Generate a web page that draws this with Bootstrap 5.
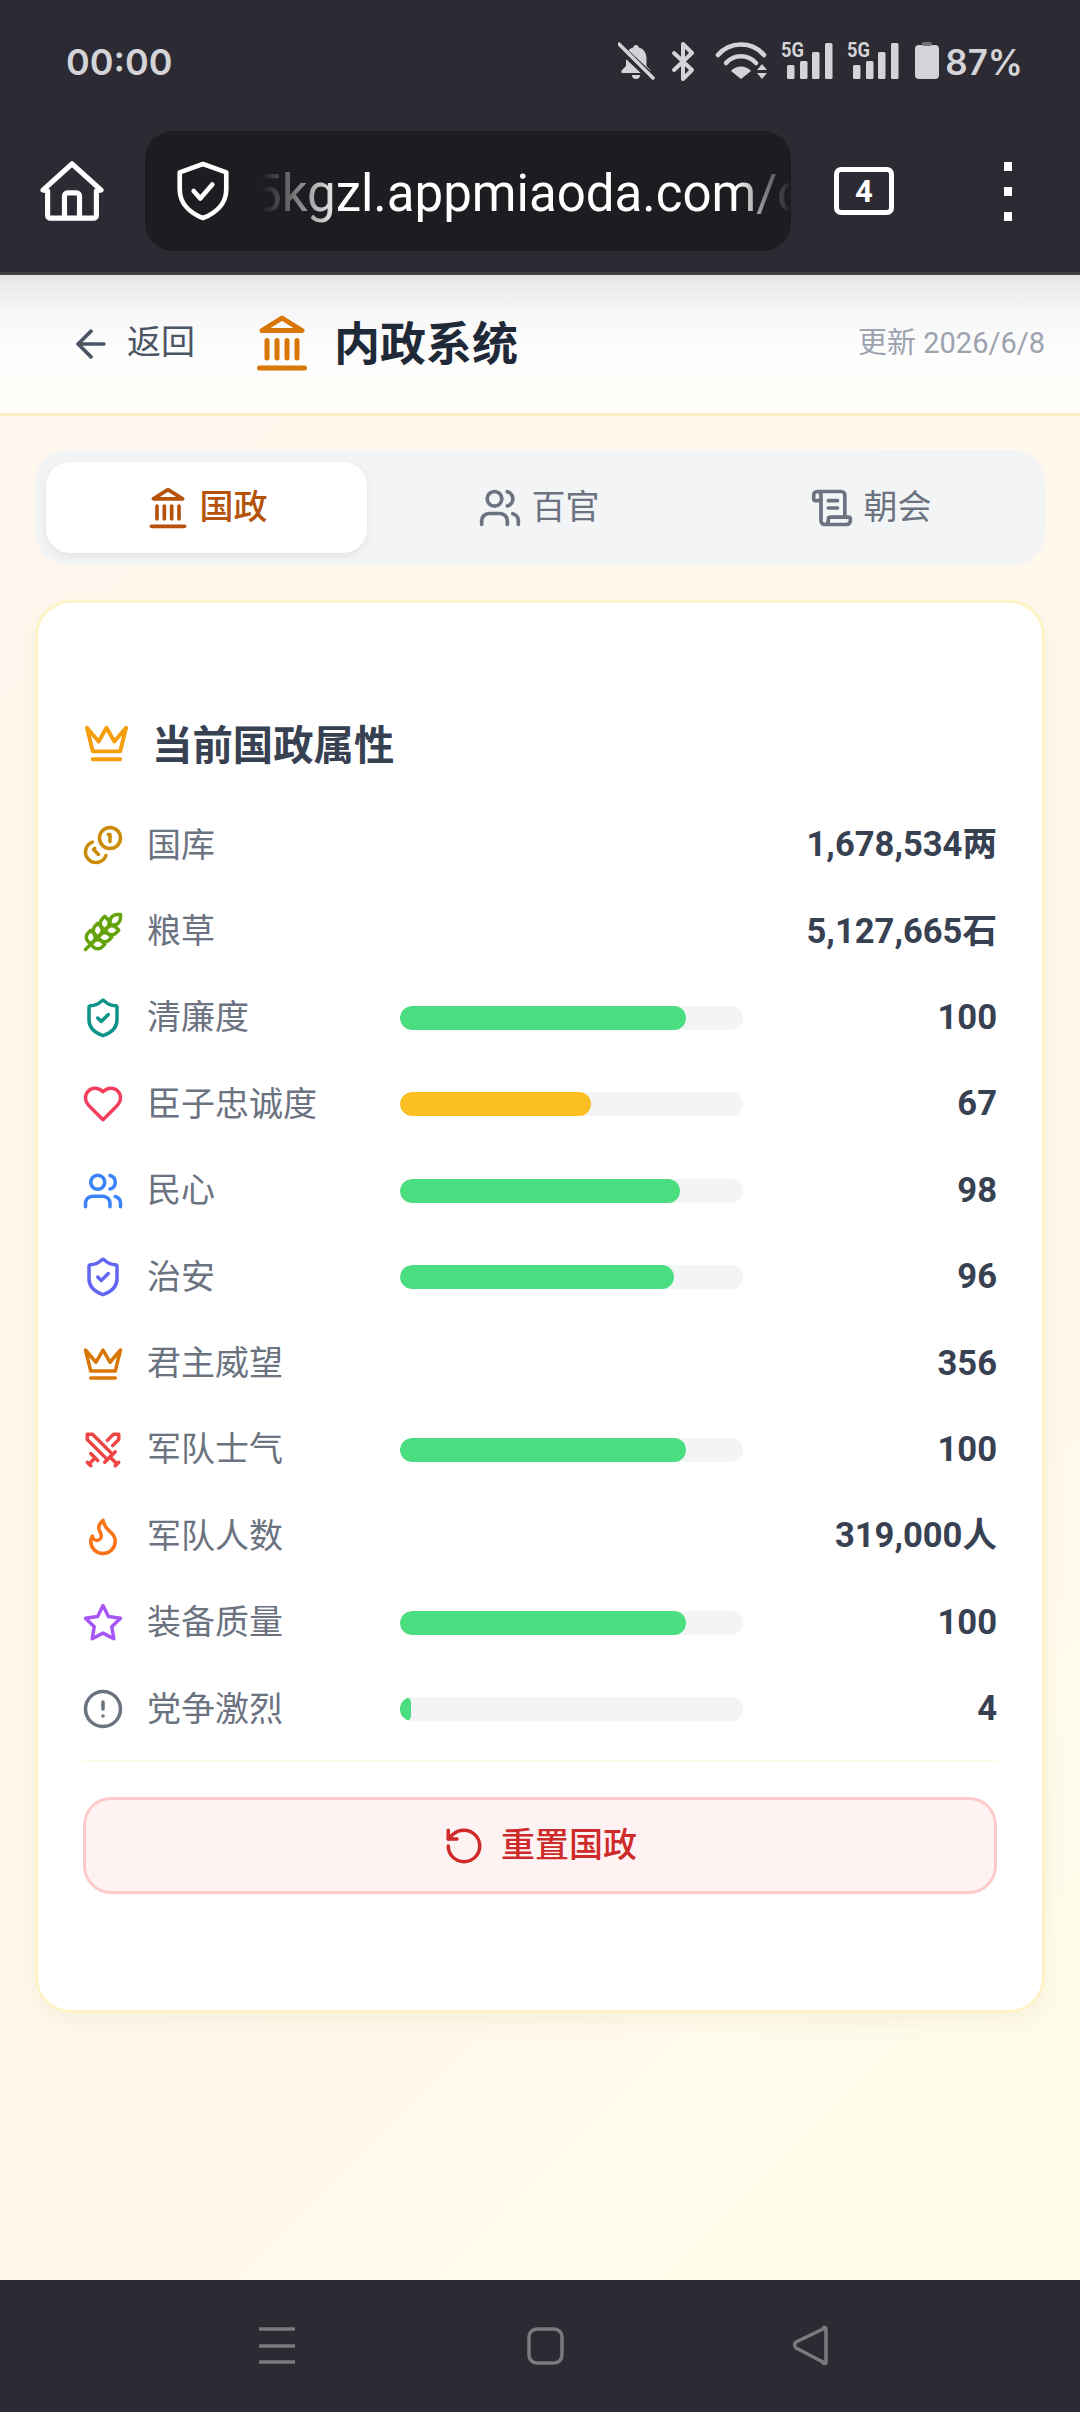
<!DOCTYPE html>
<html lang="zh-CN">
<head>
    <meta charset="UTF-8">
    <meta name="viewport" content="width=device-width, initial-scale=1.0">
    <title>内政系统</title>
    <link href="https://cdn.jsdelivr.net/npm/bootstrap@5.3.0/dist/css/bootstrap.min.css" rel="stylesheet">
    <style>
        body { font-family: Roboto, "Noto Sans CJK SC", sans-serif; height: 2412px; overflow: hidden; color: #374151; }
        .ic { fill: none; stroke: currentColor; stroke-width: 2; stroke-linecap: round; stroke-linejoin: round; flex: none; }

        /* phone + browser chrome */
        .top-chrome { height: 275px; background: #2c2b33; border-bottom: 3px solid #3f3f46; color: #fff; }
        .status-row { height: 124px; padding: 0 57px 0 66px; color: #d4d4d8; font-family: Inter, sans-serif; font-size: 36px; font-weight: 600; }
        .status-pct { font-size: 35px; }
        .status-icons { width: 322px; height: 50px; margin-right: 5px; }
        .status-icons text { font-family: Roboto, sans-serif; font-size: 20px; font-weight: 700; fill: #d4d4d8; }
        .addr-row { height: 120px; margin-top: 7px; padding-left: 40px; }
        .addr-box { width: 646px; height: 120px; margin-left: 41px; background: #1c1c21; border-radius: 28px; padding-left: 31px; overflow: hidden; }
        .addr-text { flex: 1 1 auto; min-width: 0; margin-left: 32px; padding-top: 5px; overflow: hidden; white-space: nowrap; font-size: 51px; line-height: 115px; text-indent: -9px; -webkit-mask-image: linear-gradient(90deg, transparent 0, #000 80px, #000 473px, transparent 100%); }
        .tab-count { width: 60px; height: 48px; margin-left: 43px; border: 5px solid #fff; border-radius: 7px; font-size: 31px; font-weight: 700; line-height: 1; }
        .more-dots { width: 8px; margin-left: 110px; }
        .more-dots span { width: 8px; height: 9px; background: #fff; }

        /* page header */
        .page-head { height: 141px; padding: 0 35px 0 69px; background: linear-gradient(#e6e6e6, #f6f6f6 25%, #fdfdfd 55%, #fffef9); border-bottom: 3px solid #fdf0c0; }
        .back-link { color: #4b5563; font-size: 34px; gap: 14px; }
        .back-link span { padding-bottom: 3px; }
        .head-brand { margin-left: 57px; gap: 22px; margin-top: -3px; }
        .head-title { padding-bottom: 4px; font-size: 46px; font-weight: 700; color: #1f2937; font-family: "Noto Sans CJK SC", sans-serif; }
        .head-time { font-size: 29px; color: #9ca3af; }

        .page-main { background: linear-gradient(135deg, #fff7ed, #fff9eb 70%, #fefce8); padding: 34px 35px 0; }

        /* tabs */
        .tab-strip { height: 115px; padding: 12px 11px; gap: 11px; background: #f3f4f6; border-radius: 32px; }
        .tab-item { flex: 0 0 321px; font-size: 34px; color: #6b7280; border-radius: 24px; gap: 10px; }
        .tab-item.is-on { background: #fff; color: #b45309; font-weight: 500; box-shadow: 0 3px 8px rgba(0,0,0,.07); }

        /* attribute card */
        .attr-card { height: 1413px; margin-top: 35px; padding: 110px 45px 0; background: #fff; border: 3px solid #fef3c7; border-radius: 36px; box-shadow: 0 8px 20px rgba(120,90,20,.06); }
        .attr-title { height: 60px; margin-bottom: 29px; gap: 22px; font-size: 40.4px; font-weight: 700; color: #374151; font-family: "Noto Sans CJK SC", sans-serif; }
        .attr-row { display: grid; grid-template-columns: 64px 253px 343px 1fr; align-items: center; height: 86.4px; }
        .attr-row svg { margin-left: -1px; }
        .attr-label { padding-bottom: 6px; font-size: 34px; color: #6b7280; font-family: "Noto Sans CJK SC", sans-serif; }
        .attr-track { height: 24px; background: #f3f4f6; border-radius: 12px; overflow: hidden; }
        .attr-fill { height: 24px; border-radius: 12px; background: #4ade80; }
        .attr-fill.warn { background: #fbbf24; }
        .attr-value { font-size: 34.6px; font-weight: 700; color: #374151; text-align: right; white-space: nowrap; }
        .attr-rule { height: 2px; margin-top: 8px; background: #fffbeb; }
        .reset-btn { height: 97px; margin-top: 35px; background: #fef2f2; border: 3px solid #fecaca; border-radius: 28px; color: #cf2a2a; font-size: 34px; font-weight: 500; }
        .reset-btn:hover, .reset-btn:active { background: #fef2f2 !important; border-color: #fecaca !important; color: #cf2a2a !important; }

        /* android nav */
        .nav-bottom { height: 132px; background: #2c2b33; }
    </style>
</head>
<body>
    <svg width="0" height="0" class="position-absolute">
        <symbol id="i-landmark" viewBox="0 0 24 24"><line x1="3" x2="21" y1="22" y2="22"/><line x1="6" x2="6" y1="18" y2="11"/><line x1="10" x2="10" y1="18" y2="11"/><line x1="14" x2="14" y1="18" y2="11"/><line x1="18" x2="18" y1="18" y2="11"/><polygon points="12 2 20 7 4 7"/></symbol>
        <symbol id="i-crown" viewBox="0 0 24 24"><path d="m2 4 3 12h14l3-12-6 7-4-7-4 7-6-7zm3 16h14"/></symbol>
        <symbol id="i-coins" viewBox="0 0 24 24"><circle cx="16" cy="8" r="6"/><path d="M5.91 10.37A6 6 0 1 0 13.66 18"/><path d="M15 6h1v4"/><path d="m7.29 13.88-.7.71 2.82 2.82"/></symbol>
        <symbol id="i-wheat" viewBox="0 0 24 24"><path d="M2 22 16 8"/><path d="M3.47 12.53 5 11l1.53 1.53a3.5 3.5 0 0 1 0 4.94L5 19l-1.53-1.53a3.5 3.5 0 0 1 0-4.94Z"/><path d="M7.47 8.53 9 7l1.53 1.53a3.5 3.5 0 0 1 0 4.94L9 15l-1.53-1.53a3.5 3.5 0 0 1 0-4.94Z"/><path d="M11.47 4.53 13 3l1.53 1.53a3.5 3.5 0 0 1 0 4.94L13 11l-1.53-1.53a3.5 3.5 0 0 1 0-4.94Z"/><path d="M20 2h2v2a4 4 0 0 1-4 4h-2V6a4 4 0 0 1 4-4Z"/><path d="M11.47 17.47 13 19l-1.53 1.53a3.5 3.5 0 0 1-4.94 0L5 19l1.53-1.53a3.5 3.5 0 0 1 4.94 0Z"/><path d="M15.47 13.47 17 15l-1.53 1.53a3.5 3.5 0 0 1-4.94 0L9 15l1.53-1.53a3.5 3.5 0 0 1 4.94 0Z"/><path d="M19.47 9.47 21 11l-1.53 1.53a3.5 3.5 0 0 1-4.94 0L13 11l1.53-1.53a3.5 3.5 0 0 1 4.94 0Z"/></symbol>
        <symbol id="i-shield" viewBox="0 0 24 24"><path d="M20 13c0 5-3.5 7.5-7.66 8.95a1 1 0 0 1-.67-.01C7.5 20.5 4 18 4 13V6a1 1 0 0 1 1-1c2 0 4.5-1.2 6.24-2.72a1.17 1.17 0 0 1 1.52 0C14.51 3.81 17 5 19 5a1 1 0 0 1 1 1z"/><path d="m9 12 2 2 4-4"/></symbol>
        <symbol id="i-heart" viewBox="0 0 24 24"><path d="M19 14c1.49-1.46 3-3.21 3-5.5A5.5 5.5 0 0 0 16.5 3c-1.76 0-3 .5-4.5 2-1.5-1.5-2.74-2-4.5-2A5.5 5.5 0 0 0 2 8.5c0 2.3 1.5 4.05 3 5.5l7 7Z"/></symbol>
        <symbol id="i-users" viewBox="0 0 24 24"><path d="M16 21v-2a4 4 0 0 0-4-4H6a4 4 0 0 0-4 4v2"/><path d="M16 3.13a4 4 0 0 1 0 7.75"/><path d="M22 21v-2a4 4 0 0 0-3-3.87"/><circle cx="9" cy="7" r="4"/></symbol>
        <symbol id="i-swords" viewBox="0 0 24 24"><polyline points="14.5 17.5 3 6 3 3 6 3 17.5 14.5"/><line x1="13" x2="19" y1="19" y2="13"/><line x1="16" x2="20" y1="16" y2="20"/><line x1="19" x2="21" y1="21" y2="19"/><polyline points="14.5 6.5 18 3 21 3 21 6 17.5 9.5"/><line x1="5" x2="9" y1="14" y2="18"/><line x1="7" x2="4" y1="17" y2="20"/><line x1="3" x2="5" y1="19" y2="21"/></symbol>
        <symbol id="i-flame" viewBox="0 0 24 24"><path d="M8.5 14.5A2.5 2.5 0 0 0 11 12c0-1.38-.5-2-1-3-1.072-2.143-.224-4.054 2-6 .5 2.5 2 4.9 4 6.5 2 1.6 3 3.5 3 5.5a7 7 0 1 1-14 0c0-1.153.433-2.294 1-3a2.5 2.5 0 0 0 2.5 2.5z"/></symbol>
        <symbol id="i-star" viewBox="0 0 24 24"><polygon points="12 2 15.09 8.26 22 9.27 17 14.14 18.18 21.02 12 17.77 5.82 21.02 7 14.14 2 9.27 8.91 8.26 12 2"/></symbol>
        <symbol id="i-alert" viewBox="0 0 24 24"><circle cx="12" cy="12" r="10"/><line x1="12" x2="12" y1="8" y2="12"/><line x1="12" x2="12.01" y1="16" y2="16"/></symbol>
        <symbol id="i-rotate" viewBox="0 0 24 24"><path d="M3 12a9 9 0 1 0 9-9 9.75 9.75 0 0 0-6.74 2.74L3 8"/><path d="M3 3v5h5"/></symbol>
        <symbol id="i-scroll" viewBox="0 0 24 24"><path d="M15 12h-5"/><path d="M15 8h-5"/><path d="M19 17V5a2 2 0 0 0-2-2H4"/><path d="M8 21h12a2 2 0 0 0 2-2v-1a1 1 0 0 0-1-1H11a1 1 0 0 0-1 1v1a2 2 0 1 1-4 0V5a2 2 0 1 0-4 0v2a1 1 0 0 0 1 1h3"/></symbol>
        <symbol id="i-left" viewBox="0 0 24 24"><path d="m12 19-7-7 7-7"/><path d="M19 12H5"/></symbol>
    </svg>

    <div class="d-flex flex-column vh-100">
        <!-- Barre du téléphone et du navigateur -->
        <div class="top-chrome flex-shrink-0">
            <div class="status-row d-flex align-items-center justify-content-between">
                <span>00:00</span>
                <div class="d-flex align-items-center ms-auto">
                    <svg class="status-icons" viewBox="0 -5 322 50">
                        <g fill="#d4d4d8">
                            <path d="M18 3c-1.6 0-2.600 1-2.800 2.600C10 7 8 11.500 8 16.500V24l-4.500 4.500V31h29v-2.500L28.500 24v-7.500C28.500 11.500 26 7 20.800 5.600 20.600 4 19.600 3 18 3Z"/>
                            <path d="M14 33h8a4 4 0 0 1-8 0Z"/>
                        </g>
                        <path d="M0 4 34 36" stroke="#2c2b33" stroke-width="8"/>
                        <path d="M1 2 35 36" stroke="#d4d4d8" stroke-width="3.500" stroke-linecap="round"/>
                        <path d="M56 11 74 28 65 37V2l9 9-18 17" fill="none" stroke="#d4d4d8" stroke-width="4" stroke-linejoin="round" stroke-linecap="round"/>
                        <g fill="none" stroke="#d4d4d8" stroke-width="4.500" stroke-linecap="round">
                            <path d="M100 13C112 -1 134 -1 146 13"/>
                            <path d="M108 21C116 12 130 12 138 21"/>
                        </g>
                        <g fill="#d4d4d8">
                            <path d="M123 37 113 29C118 23 128 23 133 29Z"/>
                            <path d="M144 22 149 28H139ZM144 37 149 31H139Z"/>
                            <rect x="169" y="23" width="7.500" height="14" rx="1.500"/><rect x="182" y="19" width="7.500" height="18" rx="1.500"/><rect x="194" y="10" width="7.500" height="27" rx="1.500"/><rect x="207" y="1" width="7.500" height="36" rx="1.500"/>
                            <rect x="235" y="23" width="7.500" height="14" rx="1.500"/><rect x="248" y="19" width="7.500" height="18" rx="1.500"/><rect x="260" y="10" width="7.500" height="27" rx="1.500"/><rect x="273" y="1" width="7.500" height="36" rx="1.500"/>
                            <rect x="297" y="3" width="24" height="34" rx="4"/>
                        </g>
                        <rect x="304" y="0" width="10" height="4" rx="2" fill="#71717a"/>
                        <text x="163" y="15" textLength="23" lengthAdjust="spacingAndGlyphs">5G</text>
                        <text x="229" y="15" textLength="23" lengthAdjust="spacingAndGlyphs">5G</text>
                    </svg>
                    <span class="status-pct">87%</span>
                </div>
            </div>
            <div class="addr-row d-flex align-items-center">
                <svg width="64" height="60" viewBox="0 0 68 64" fill="none" stroke="#fff" stroke-width="5.500" stroke-linejoin="round" stroke-linecap="round">
                    <path d="M3 31 34 3l31 28-5 1v26a3 3 0 0 1-3 3H11a3 3 0 0 1-3-3V32Z"/>
                    <path d="M26 60V37a3 3 0 0 1 3-3h10a3 3 0 0 1 3 3v23"/>
                </svg>
                <div class="addr-box d-flex align-items-center">
                    <svg width="54" height="62" viewBox="0 0 58 64" fill="none" stroke="#fff" stroke-width="5" stroke-linejoin="round" stroke-linecap="round" class="flex-shrink-0">
                        <path d="M29 3 54 12V30C54 46 42 56 29 61 16 56 4 46 4 30V12Z"/>
                        <path d="m19 32 7 8 13-15"/>
                    </svg>
                    <div class="addr-text">5kgzl.appmiaoda.com/c</div>
                </div>
                <div class="tab-count d-flex align-items-center justify-content-center">4</div>
                <div class="more-dots d-flex flex-column gap-3"><span></span><span></span><span></span></div>
            </div>
        </div>

        <!-- En-tête de page -->
        <header class="page-head d-flex align-items-center flex-shrink-0">
            <a class="back-link d-flex align-items-center text-decoration-none" href="#">
                <svg class="ic" width="44" height="44"><use href="#i-left"/></svg>
                <span>返回</span>
            </a>
            <div class="head-brand d-flex align-items-center">
                <svg class="ic" width="60" height="60" style="color:#d97706"><use href="#i-landmark"/></svg>
                <span class="head-title">内政系统</span>
            </div>
            <span class="head-time ms-auto">更新 2026/6/8</span>
        </header>

        <main class="page-main flex-grow-1">
            <div class="tab-strip d-flex">
                <div class="tab-item is-on d-flex align-items-center justify-content-center">
                    <svg class="ic" width="44" height="44"><use href="#i-landmark"/></svg><span>国政</span>
                </div>
                <div class="tab-item d-flex align-items-center justify-content-center">
                    <svg class="ic" width="44" height="44"><use href="#i-users"/></svg><span>百官</span>
                </div>
                <div class="tab-item d-flex align-items-center justify-content-center">
                    <svg class="ic" width="44" height="44"><use href="#i-scroll"/></svg><span>朝会</span>
                </div>
            </div>

            <div class="attr-card">
                <div class="attr-title d-flex align-items-center">
                    <svg class="ic" width="47" height="47" style="color:#f59e0b"><use href="#i-crown"/></svg>
                    <span>当前国政属性</span>
                </div>

                <div class="attr-row">
                    <svg class="ic" width="42" height="42" style="color:#ca8a04"><use href="#i-coins"/></svg>
                    <span class="attr-label">国库</span><span></span>
                    <span class="attr-value">1,678,534两</span>
                </div>
                <div class="attr-row">
                    <svg class="ic" width="42" height="42" style="color:#65a30d"><use href="#i-wheat"/></svg>
                    <span class="attr-label">粮草</span><span></span>
                    <span class="attr-value">5,127,665石</span>
                </div>
                <div class="attr-row">
                    <svg class="ic" width="42" height="42" style="color:#0d9488"><use href="#i-shield"/></svg>
                    <span class="attr-label">清廉度</span>
                    <div class="attr-track"><div class="attr-fill" style="width:83.33%"></div></div>
                    <span class="attr-value">100</span>
                </div>
                <div class="attr-row">
                    <svg class="ic" width="42" height="42" style="color:#f43f5e"><use href="#i-heart"/></svg>
                    <span class="attr-label">臣子忠诚度</span>
                    <div class="attr-track"><div class="attr-fill warn" style="width:55.83%"></div></div>
                    <span class="attr-value">67</span>
                </div>
                <div class="attr-row">
                    <svg class="ic" width="42" height="42" style="color:#3b82f6"><use href="#i-users"/></svg>
                    <span class="attr-label">民心</span>
                    <div class="attr-track"><div class="attr-fill" style="width:81.67%"></div></div>
                    <span class="attr-value">98</span>
                </div>
                <div class="attr-row">
                    <svg class="ic" width="42" height="42" style="color:#6366f1"><use href="#i-shield"/></svg>
                    <span class="attr-label">治安</span>
                    <div class="attr-track"><div class="attr-fill" style="width:80%"></div></div>
                    <span class="attr-value">96</span>
                </div>
                <div class="attr-row">
                    <svg class="ic" width="42" height="42" style="color:#d97706"><use href="#i-crown"/></svg>
                    <span class="attr-label">君主威望</span><span></span>
                    <span class="attr-value">356</span>
                </div>
                <div class="attr-row">
                    <svg class="ic" width="42" height="42" style="color:#ef4444"><use href="#i-swords"/></svg>
                    <span class="attr-label">军队士气</span>
                    <div class="attr-track"><div class="attr-fill" style="width:83.33%"></div></div>
                    <span class="attr-value">100</span>
                </div>
                <div class="attr-row">
                    <svg class="ic" width="42" height="42" style="color:#f97316"><use href="#i-flame"/></svg>
                    <span class="attr-label">军队人数</span><span></span>
                    <span class="attr-value">319,000人</span>
                </div>
                <div class="attr-row">
                    <svg class="ic" width="42" height="42" style="color:#a855f7"><use href="#i-star"/></svg>
                    <span class="attr-label">装备质量</span>
                    <div class="attr-track"><div class="attr-fill" style="width:83.33%"></div></div>
                    <span class="attr-value">100</span>
                </div>
                <div class="attr-row">
                    <svg class="ic" width="42" height="42" style="color:#6b7280"><use href="#i-alert"/></svg>
                    <span class="attr-label">党争激烈</span>
                    <div class="attr-track"><div class="attr-fill" style="width:3.33%"></div></div>
                    <span class="attr-value">4</span>
                </div>

                <div class="attr-rule"></div>
                <button type="button" class="btn reset-btn w-100 d-flex align-items-center justify-content-center gap-3">
                    <svg class="ic" width="42" height="42"><use href="#i-rotate"/></svg>
                    <span>重置国政</span>
                </button>
            </div>
        </main>

        <!-- Barre de navigation Android -->
        <div class="nav-bottom d-flex align-items-center flex-shrink-0">
            <svg width="1080" height="132" viewBox="0 0 1080 132" fill="none" stroke="#7a7a80" stroke-width="3.500" stroke-linejoin="round">
                <path d="M259 49h36M259 66h36M259 82h36"/>
                <rect x="529" y="49" width="33" height="34" rx="8"/>
                <path d="M826 49a1 1 0 0 0-3 0L796 62a4 4 0 0 0 0 6l27 14a1 1 0 0 0 3 0Z"/>
            </svg>
        </div>
    </div>

    <script src="https://cdn.jsdelivr.net/npm/bootstrap@5.3.0/dist/js/bootstrap.bundle.min.js"></script>
</body>
</html>
